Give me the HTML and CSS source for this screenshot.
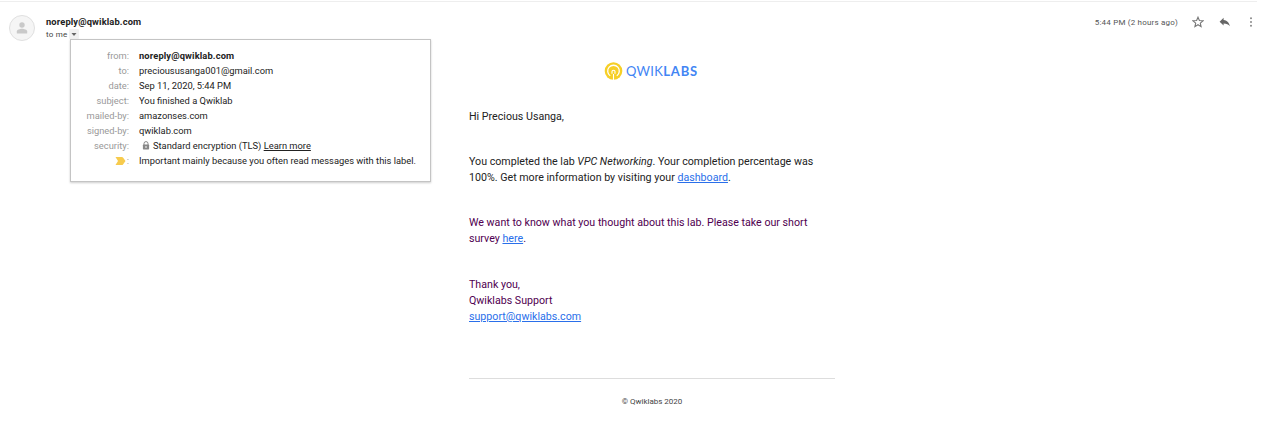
FILE: index.html
```
<!DOCTYPE html>
<html lang="en">
<head>
<meta charset="utf-8">
<title>Qwiklabs message</title>
<link rel="stylesheet" href="styles.css">
</head>
<body>
<main class="message">
  <header class="header">
    <div class="avatar">
      <svg width="12" height="12" viewBox="0 0 12 12" fill="#c9c9c9"><circle cx="6" cy="3" r="2.7"/><path d="M.8 11.5V9.4C.8 7.7 4 6.8 6 6.8s5.2.9 5.2 2.6v2.1z"/></svg>
    </div>
    <div class="sender">
      <div class="sender-name"><span>noreply@qwiklab.com</span></div>
      <div class="recipient"><span>to me</span><span class="toggle"><svg width="6" height="3" viewBox="0 0 6 3"><path d="M.5 0h5L3 3z" fill="#666"/></svg></span>
        <div class="details">
          <dl class="rows">
            <dt>from:</dt><dd><b>noreply@qwiklab.com</b></dd>
            <dt>to:</dt><dd><span>precioususanga001@gmail.com</span></dd>
            <dt>date:</dt><dd><span>Sep 11, 2020, 5:44 PM</span></dd>
            <dt>subject:</dt><dd><span>You finished a Qwiklab</span></dd>
            <dt>mailed-by:</dt><dd><span>amazonses.com</span></dd>
            <dt>signed-by:</dt><dd><span>qwiklab.com</span></dd>
            <dt>security:</dt><dd class="secure"><svg width="8" height="9" viewBox="0 0 8 9"><path d="M2 4V2.600a2 2 0 0 1 4 0V4" fill="none" stroke="#888" stroke-width="1"/><rect x=".9" y="3.500" width="6.200" height="5" rx=".7" fill="#888"/><circle cx="4" cy="6" r=".9" fill="#ddd"/></svg><span>Standard encryption (TLS) <a class="more">Learn more</a></span></dd>
            <dt class="important"><svg width="11" height="8" viewBox="0 0 11 8"><path d="M.5 0H7q.6 0 1 .5L10.500 4 8 7.500Q7.600 8 7 8H.5L3 4z" fill="#f7cb4d"/></svg><span>:</span></dt><dd><span>Important mainly because you often read messages with this label.</span></dd>
          </dl>
        </div>
      </div>
    </div>
    <div class="meta">
      <span class="time">5:44 PM (2 hours ago)</span>
      <svg class="star" width="12" height="12" viewBox="0 0 12 12"><path d="M6 1.200 7.400 4.500 11 4.800 8.300 7.100 9.100 10.600 6 8.750 2.900 10.600 3.700 7.100 1 4.800 4.600 4.500z" fill="none" stroke="#777" stroke-width="1.100"/></svg>
      <svg class="reply" width="12" height="10" viewBox="0 0 12 10"><path d="M4.600 2.900V.8L.6 4.700l4 3.900V6.400c2.900 0 4.900.9 6.300 2.900-.5-2.900-2.200-5.800-6.300-6.400z" fill="#666"/></svg>
      <svg class="dots" width="4" height="12" viewBox="0 0 4 12" fill="#888"><circle cx="2" cy="2.200" r="1"/><circle cx="2" cy="6" r="1"/><circle cx="2" cy="9.800" r="1"/></svg>
    </div>
  </header>
  <article class="content">
    <div class="logo">
      <svg width="19" height="20" viewBox="0 0 19 20"><circle cx="9.500" cy="10" r="8.800" fill="#f6cf27"/><path d="M6.200 14.800A5.800 5.800 0 1 1 12.800 14.800" fill="none" stroke="#fff" stroke-width="1.300"/><path d="M8 12.700V10.500q0-1.200 1.500-1.200T11 10.500v2.200M9.500 13v6" fill="none" stroke="#fff" stroke-width="1.100"/></svg>
      <span class="wordmark">QWIK<b>LABS</b></span>
    </div>
    <p class="greeting">Hi Precious Usanga,</p>
    <p class="result">You completed the lab <i>VPC Networking</i>. Your completion percentage was<br>100%. Get more information by visiting your <a>dashboard</a>.</p>
    <p class="survey">We want to know what you thought about this lab. Please take our short<br>survey <a>here</a>.</p>
    <p class="signature">Thank you,<br>Qwiklabs Support<br><a>support@qwiklabs.com</a></p>
    <footer class="footer">© Qwiklabs 2020</footer>
  </article>
</main>
</body>
</html>
```
FILE: styles.css
```
* { box-sizing: border-box; }
body { margin: 0; background: #fff; color: #222; font-family: Roboto, sans-serif; }
svg { display: block; flex: none; }
p, dl, dd { margin: 0; }
.message { height: 436px; padding-top: 1px; overflow: hidden; }
.header { display: flex; align-items: flex-start; width: 1257px; height: 60px; padding: 14px 4px 0 9px; border-top: 1px solid #eee; }
.avatar { display: flex; align-items: center; justify-content: center; width: 26px; height: 26px; margin-top: -1px; border: 1px solid #e0e0e0; border-radius: 50%; background: #f5f5f5; }
.sender { margin-left: 11px; }
.sender-name { height: 13px; line-height: 13px; margin-top: -1px; font-size: 9.330px; font-weight: 700; letter-spacing: .13px; }
.recipient { position: relative; display: flex; align-items: center; height: 12px; font-size: 8px; letter-spacing: .2px; color: #444; }
.toggle { display: flex; align-items: center; justify-content: center; width: 10px; height: 10px; margin-left: 2px; background: #f1f1f1; border-radius: 1px; }
.details { position: absolute; top: 11px; left: 24px; width: 361px; height: 143px; padding: 8px 0 0 12px; border: 1px solid #c4c4c4; background: #fff; box-shadow: 0 1px 2px rgba(0,0,0,.2); color: #222; font-size: 9.330px; letter-spacing: 0; }
.rows { display: grid; grid-template-columns: 46px 1fr; column-gap: 10px; grid-auto-rows: 15px; line-height: 15px; white-space: nowrap; }
.rows dt { color: #999; text-align: right; }
.rows b { letter-spacing: .13px; }
.secure { display: flex; align-items: center; gap: 3px; padding-left: 3px; }
.more { text-decoration: underline; }
.important { display: flex; align-items: center; justify-content: flex-end; gap: 1px; }
.meta { display: flex; align-items: center; height: 12px; margin-left: auto; }
.time { margin-right: 14px; font-size: 8px; letter-spacing: .2px; color: #555; }
.star { margin-right: 15px; }
.reply { margin-right: 18px; }
.content { width: 366px; margin-left: 469px; font-size: 10.670px; line-height: 16px; white-space: nowrap; }
.logo { display: flex; align-items: center; height: 20px; margin-left: 135px; }
.wordmark { margin-left: 3px; color: #4285f4; font-family: Lato, sans-serif; font-size: 13px; letter-spacing: .3px; }
.wordmark b { letter-spacing: .85px; }
.greeting { margin-top: 28px; }
.result, .survey { margin-top: 29px; }
.signature { margin-top: 30px; }
.survey, .signature { color: #500050; }
.content a { color: #2a6fea; text-decoration: underline; }
.footer { margin-top: 53px; padding-top: 15px; border-top: 1px solid #ddd; color: #444; font-size: 8px; text-align: center; }
```
